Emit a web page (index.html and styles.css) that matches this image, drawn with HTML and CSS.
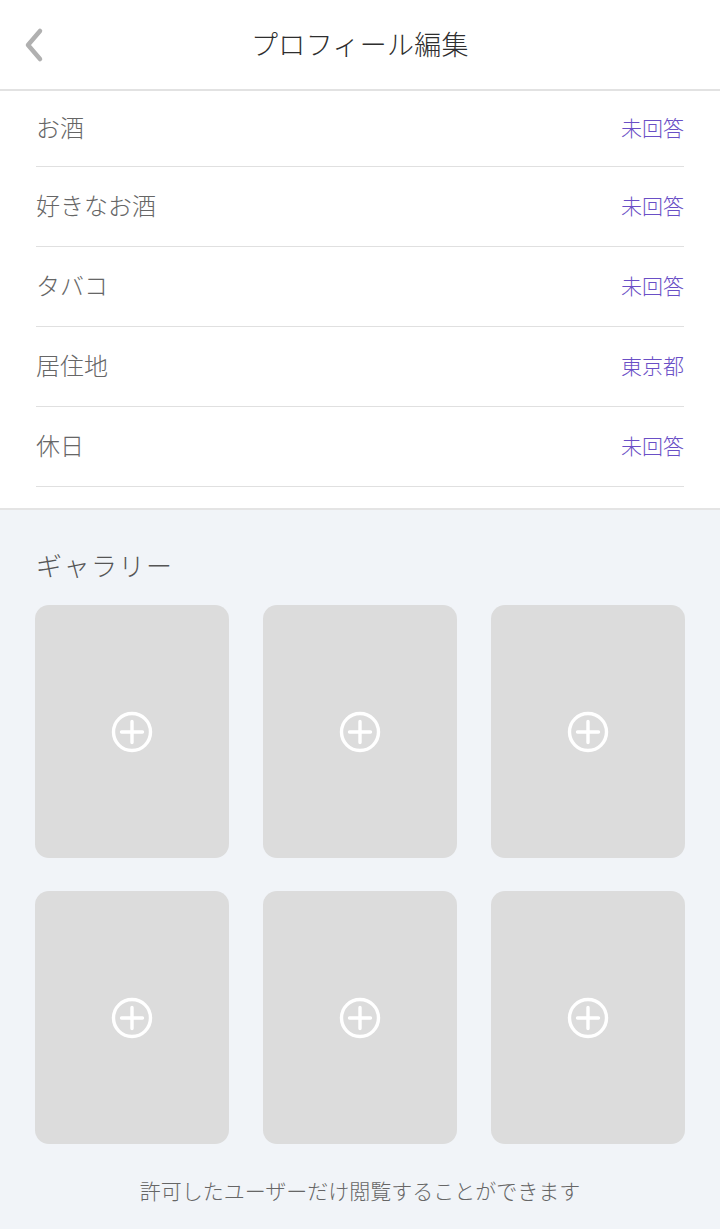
FILE: index.html
```html
<!DOCTYPE html>
<html lang="ja">
<head>
<meta charset="utf-8">
<link rel="stylesheet" href="styles.css">
</head>
<body>
<div class="page">
  <header class="header">
    <svg class="back" width="24" height="36" viewBox="0 0 24 36"><path d="M18 4 L6 18 L18 32" fill="none" stroke="#b0b0b0" stroke-width="4.5" stroke-linecap="round" stroke-linejoin="round"/></svg>
    <h1 class="title">プロフィール編集</h1>
  </header>
  <ul class="list">
    <li class="row"><span class="label">お酒</span><span class="value">未回答</span></li>
    <li class="row"><span class="label">好きなお酒</span><span class="value">未回答</span></li>
    <li class="row"><span class="label">タバコ</span><span class="value">未回答</span></li>
    <li class="row"><span class="label">居住地</span><span class="value">東京都</span></li>
    <li class="row"><span class="label">休日</span><span class="value">未回答</span></li>
  </ul>
  <section class="gallery">
    <h2 class="gallery-title">ギャラリー</h2>
    <div class="grid">
      <div class="tile"><svg class="plus" width="44" height="44" viewBox="0 0 44 44"><circle cx="22" cy="22" r="18.5" fill="none" stroke="#fff" stroke-width="3.4"/><path d="M22 11.5 V32.5 M11.5 22 H32.5" stroke="#fff" stroke-width="3.4" stroke-linecap="round"/></svg></div>
      <div class="tile"><svg class="plus" width="44" height="44" viewBox="0 0 44 44"><circle cx="22" cy="22" r="18.5" fill="none" stroke="#fff" stroke-width="3.4"/><path d="M22 11.5 V32.5 M11.5 22 H32.5" stroke="#fff" stroke-width="3.4" stroke-linecap="round"/></svg></div>
      <div class="tile"><svg class="plus" width="44" height="44" viewBox="0 0 44 44"><circle cx="22" cy="22" r="18.5" fill="none" stroke="#fff" stroke-width="3.4"/><path d="M22 11.5 V32.5 M11.5 22 H32.5" stroke="#fff" stroke-width="3.4" stroke-linecap="round"/></svg></div>
      <div class="tile"><svg class="plus" width="44" height="44" viewBox="0 0 44 44"><circle cx="22" cy="22" r="18.5" fill="none" stroke="#fff" stroke-width="3.4"/><path d="M22 11.5 V32.5 M11.5 22 H32.5" stroke="#fff" stroke-width="3.4" stroke-linecap="round"/></svg></div>
      <div class="tile"><svg class="plus" width="44" height="44" viewBox="0 0 44 44"><circle cx="22" cy="22" r="18.5" fill="none" stroke="#fff" stroke-width="3.4"/><path d="M22 11.5 V32.5 M11.5 22 H32.5" stroke="#fff" stroke-width="3.4" stroke-linecap="round"/></svg></div>
      <div class="tile"><svg class="plus" width="44" height="44" viewBox="0 0 44 44"><circle cx="22" cy="22" r="18.5" fill="none" stroke="#fff" stroke-width="3.4"/><path d="M22 11.5 V32.5 M11.5 22 H32.5" stroke="#fff" stroke-width="3.4" stroke-linecap="round"/></svg></div>
    </div>
    <p class="note">許可したユーザーだけ閲覧することができます</p>
  </section>
</div>
</body>
</html>
```

FILE: styles.css
```css
* { box-sizing: border-box; }
html, body { margin: 0; padding: 0; }
body {
  font-family: "Noto Sans CJK JP", "Noto Sans", sans-serif;
  font-weight: 300;
  background: #f1f4f8;
  width: 720px;
  min-height: 1229px;
}
.page { display: flex; flex-direction: column; min-height: 1229px; }
.header {
  position: relative;
  height: 91px;
  background: #fff;
  border-bottom: 2px solid #e2e2e2;
  display: flex;
  align-items: center;
  justify-content: center;
}
.back { position: absolute; left: 22px; top: 27px; }
.title {
  margin: 0;
  font-size: 27px;
  font-weight: 300;
  color: #2e2e2e;
  letter-spacing: 0.3px;
  margin-top: -2px;
}
.list {
  list-style: none;
  margin: 0;
  padding: 0 36px 21px;
  background: #fff;
  border-bottom: 2px solid #e4e4e4;
}
.row {
  display: flex;
  justify-content: space-between;
  align-items: center;
  height: 80px;
  border-bottom: 1.5px solid #e0e0e0;
  padding-bottom: 4px;
}
.row:first-child { height: 76px; }
.label { font-size: 24px; color: #666; }
.value { font-size: 21px; color: #6a4fc6; }
.gallery { flex: 1; padding: 0 35px; }
.gallery-title {
  margin: 36px 0 21px 1px;
  font-size: 26px;
  font-weight: 300;
  color: #555;
  line-height: 38px;
  letter-spacing: 1.5px;
}
.grid {
  display: grid;
  grid-template-columns: repeat(3, 194px);
  column-gap: 34px;
  row-gap: 33px;
}
.tile {
  height: 253px;
  background: #dcdcdc;
  border-radius: 14px;
  display: flex;
  align-items: center;
  justify-content: center;
}
.note {
  margin: 31px 0 0;
  text-align: center;
  font-size: 21px;
  color: #666;
  line-height: 30px;
}
```
